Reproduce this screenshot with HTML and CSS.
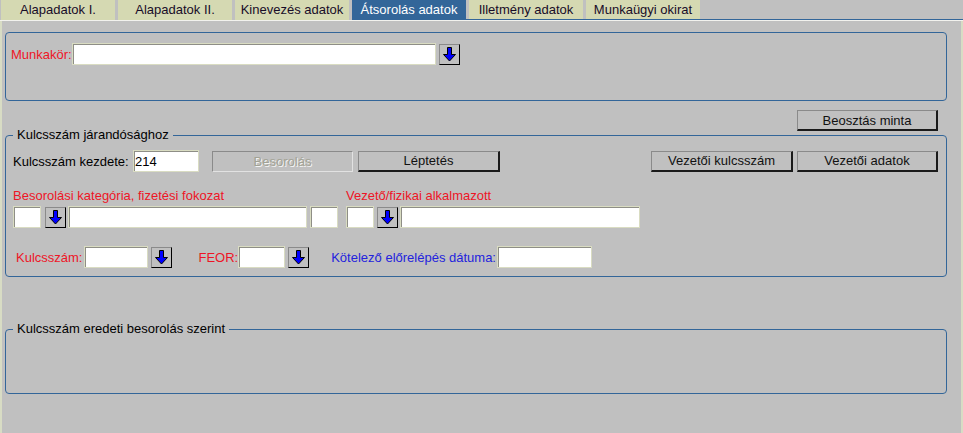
FILE: index.html
```html
<!DOCTYPE html>
<html lang="hu">
<head>
<meta charset="utf-8">
<title>Átsorolás adatok</title>
<link rel="stylesheet" href="styles.css">
</head>
<body>
<nav class="tabs">
  <div class="tab">Alapadatok I.</div>
  <div class="tab">Alapadatok II.</div>
  <div class="tab">Kinevezés adatok</div>
  <div class="tab active">Átsorolás adatok</div>
  <div class="tab short">Illetmény adatok</div>
  <div class="tab short">Munkaügyi okirat</div>
</nav>
<div class="tabrule"></div>
<main class="page">
  <section class="panel">
    <div class="row">
      <span class="lbl red">Munkakör:</span>
      <input class="inp w-munkakor" type="text">
      <button class="arrow ml-3" type="button"><svg width="13" height="15" viewBox="0 0 13 15"><path d="M4.5 .5H8.5V7.5H12.5L6.5 14L.5 7.5H4.5Z" fill="#0000ff" stroke="#000"/></svg></button>
    </div>
  </section>

  <div class="toolbar">
    <button class="btn w-141" type="button">Beosztás minta</button>
  </div>

  <fieldset class="group">
    <legend>Kulcsszám járandósághoz</legend>
    <div class="row r1">
      <span class="lbl w-kezdete">Kulcsszám kezdete:</span>
      <input class="inp w-66" type="text" value="214">
      <button class="btn disabled w-141 ml-13" type="button">Besorolás</button>
      <button class="btn w-142 ml-5" type="button">Léptetés</button>
      <span class="spacer"></span>
      <button class="btn w-142" type="button">Vezetői kulcsszám</button>
      <button class="btn w-141 ml-4" type="button">Vezetői adatok</button>
    </div>

    <div class="row r2">
      <div class="col col-a">
        <div class="cap red">Besorolási kategória, fizetési fokozat</div>
        <div class="row">
          <input class="inp w-28" type="text">
          <button class="arrow ml-4" type="button"><svg width="13" height="15" viewBox="0 0 13 15"><path d="M4.5 .5H8.5V7.5H12.5L6.5 14L.5 7.5H4.5Z" fill="#0000ff" stroke="#000"/></svg></button>
          <input class="inp w-239 ml-2" type="text">
          <input class="inp w-28 ml-3" type="text">
        </div>
      </div>
      <div class="col col-b">
        <div class="cap red">Vezető/fizikai alkalmazott</div>
        <div class="row">
          <input class="inp w-28" type="text">
          <button class="arrow ml-3" type="button"><svg width="13" height="15" viewBox="0 0 13 15"><path d="M4.5 .5H8.5V7.5H12.5L6.5 14L.5 7.5H4.5Z" fill="#0000ff" stroke="#000"/></svg></button>
          <input class="inp w-240 ml-2" type="text">
        </div>
      </div>
    </div>

    <div class="row r3">
      <span class="lbl red ml-3">Kulcsszám:</span>
      <input class="inp w-64 ml-2" type="text">
      <button class="arrow ml-3" type="button"><svg width="13" height="15" viewBox="0 0 13 15"><path d="M4.5 .5H8.5V7.5H12.5L6.5 14L.5 7.5H4.5Z" fill="#0000ff" stroke="#000"/></svg></button>
      <span class="lbl red ml-26">FEOR:</span>
      <input class="inp w-47" type="text">
      <button class="arrow ml-3" type="button"><svg width="13" height="15" viewBox="0 0 13 15"><path d="M4.5 .5H8.5V7.5H12.5L6.5 14L.5 7.5H4.5Z" fill="#0000ff" stroke="#000"/></svg></button>
      <span class="lbl blue ml-22">Kötelező előrelépés dátuma:</span>
      <input class="inp w-95 ml-1" type="text">
    </div>
  </fieldset>

  <fieldset class="group group-empty">
    <legend>Kulcsszám eredeti besorolás szerint</legend>
    <div class="empty"></div>
  </fieldset>
</main>
</body>
</html>
```

FILE: styles.css
```css
* { box-sizing: border-box; }
html, body { margin: 0; height: 100%; }
body {
  background: #c0c0c0;
  font-family: "Liberation Sans", Arial, sans-serif;
  font-size: 13px;
  color: #000;
  overflow: hidden;
}

/* tabs */
.tabs {
  display: flex;
  align-items: flex-start;
  gap: 3px;
  height: 20px;
  padding-left: 1px;
  background: linear-gradient(#336699, #336699) 352px 19px / 100% 1px no-repeat;
}
.tab {
  width: 114px;
  height: 20px;
  background: #d5d9b2;
  text-align: center;
  line-height: 19px;
  color: #180c28;
  white-space: nowrap;
}
.tab.short { height: 19px; }
.tab.active { background: #336699; color: #fff; }
.tabrule { height: 1px; background: #f2f2ee; }

/* page */
.page {
  height: calc(100% - 21px);
  border-left: 2px solid #d8dcc4;
  border-right: 2px solid #d8dcc4;
  padding: 11px 14px 0 3px;
}

.panel {
  border: 1px solid #336699;
  border-radius: 4px;
  height: 69px;
  padding: 10px 5px 0;
}

.row { display: flex; align-items: center; }
.lbl { white-space: nowrap; line-height: 15px; }
.red { color: #ee1526; }
.blue { color: #2323dd; }

.inp {
  height: 22px;
  margin: 0;
  padding: 0 1px;
  border: 1px solid #d9dcc2;
  box-shadow: inset 1px 1px 0 #8e8e86;
  background: #fff;
  font-family: "Liberation Sans", Arial, sans-serif;
  font-size: 13px;
  font-weight: 400;
  color: #000;
  outline: none;
}

.arrow {
  width: 21px;
  height: 21px;
  padding: 0;
  background: #c0c0c0;
  border: 1px solid;
  border-color: #8a8a8a #000 #000 #8a8a8a;
  display: flex;
  align-items: center;
  justify-content: center;
}
.arrow svg { display: block; }

.btn {
  height: 21px;
  padding: 0;
  background: #c0c0c0;
  border-style: solid;
  border-width: 1px 2px 2px 1px;
  border-color: #8a8a8a #1a1a1a #1a1a1a #8a8a8a;
  font-family: "Liberation Sans", Arial, sans-serif;
  font-size: 13px;
  font-weight: 400;
  color: #111;
}
.btn.disabled {
  border-width: 1px;
  border-color: #8a8a8a #e2e2e2 #e2e2e2 #8a8a8a;
  color: #a2a294;
  text-shadow: 1px 1px 0 #f4f4f4;
}

.toolbar {
  display: flex;
  justify-content: flex-end;
  margin-top: 9px;
  padding-right: 9px;
}

/* fieldsets */
.group {
  margin: -3px 0 0;
  padding: 0 8px 8px 7px;
  border: 1px solid #336699;
  border-radius: 4px;
  min-width: 0;
}
.group legend {
  padding: 0 4px;
  line-height: 14px;
  font-size: 13px;
}
.group-empty { margin-top: 45px; padding: 0; }
.group-empty legend { margin-left: 7px; }
.empty { height: 57px; }

.r1 { margin-top: 8px; }
.r2 { margin-top: 16px; align-items: flex-start; gap: 8px; }
.r3 { margin-top: 18px; }
.col { display: flex; flex-direction: column; }
.cap { line-height: 15px; margin-bottom: 3px; white-space: nowrap; }
.spacer { flex: 1; }

/* sizes */
.w-munkakor { width: 364px; }
.w-kezdete { width: 120px; }
.w-28 { width: 28px; }
.w-47 { width: 47px; }
.w-64 { width: 64px; }
.w-66 { width: 66px; }
.w-95 { width: 95px; }
.w-141 { width: 141px; }
.w-142 { width: 142px; }
.w-239 { width: 239px; }
.w-240 { width: 240px; }

.ml-1 { margin-left: 1px; }
.ml-2 { margin-left: 2px; }
.ml-3 { margin-left: 3px; }
.ml-4 { margin-left: 4px; }
.ml-5 { margin-left: 5px; }
.ml-13 { margin-left: 13px; }
.ml-22 { margin-left: 22px; }
.ml-26 { margin-left: 26px; }
```
